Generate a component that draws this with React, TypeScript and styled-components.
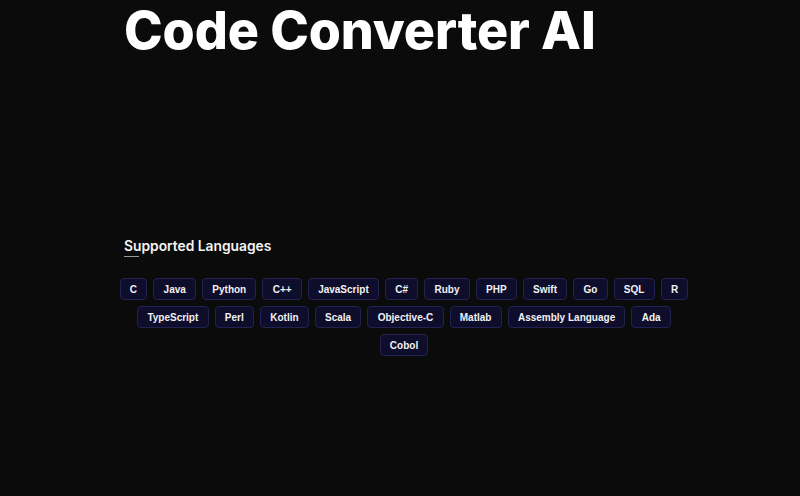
import React from 'react';
import styled, { createGlobalStyle } from 'styled-components';

const GlobalStyle = createGlobalStyle`
  html, body {
    margin: 0;
    padding: 0;
    background: #0b0b0b;
  }
  body {
    font-family: 'Inter', 'Liberation Sans', sans-serif;
    color: #ffffff;
  }
`;

const Page = styled.div`
  min-height: 496px;
  background: #0b0b0b;
  padding: 0 0 0 124px;
  box-sizing: border-box;
`;

const Title = styled.h1`
  margin: 0;
  padding-top: 1px;
  font-family: 'Inter', sans-serif;
  font-weight: 800;
  font-size: 52px;
  line-height: 60px;
  letter-spacing: -0.1px;
  color: #ffffff;
`;

const Section = styled.section`
  margin-top: 176px;
`;

const SectionTitle = styled.h2`
  margin: 0;
  font-family: 'Inter', sans-serif;
  font-weight: 600;
  font-size: 13.8px;
  line-height: 18px;
  color: #f4f4f4;
`;

const Underline = styled.div`
  width: 15px;
  height: 1px;
  margin-top: 1px;
  background: #9a9a9a;
`;

const TagList = styled.ul`
  list-style: none;
  margin: 21px 0 0 -8px;
  padding: 0;
  width: 576px;
  display: flex;
  flex-wrap: wrap;
  justify-content: center;
  gap: 6px;
`;

const Tag = styled.li`
  box-sizing: border-box;
  height: 22px;
  padding: 0 9.25px;
  display: flex;
  align-items: center;
  background: #0e0d2b;
  border: 1px solid #222150;
  border-radius: 4px;
  font-family: 'Liberation Sans', Arial, sans-serif;
  font-weight: 700;
  font-size: 10px;
  color: #f2f2f2;
  white-space: nowrap;
`;

const languages = [
  'C', 'Java', 'Python', 'C++', 'JavaScript', 'C#', 'Ruby', 'PHP', 'Swift', 'Go', 'SQL', 'R',
  'TypeScript', 'Perl', 'Kotlin', 'Scala', 'Objective-C', 'Matlab', 'Assembly Language', 'Ada',
  'Cobol'
];

export default function App() {
  return (
    <>
      <GlobalStyle />
      <Page>
        <Title>Code Converter AI</Title>
        <Section>
          <SectionTitle>Supported Languages</SectionTitle>
          <Underline />
          <TagList>
            {languages.map((lang) => (
              <Tag key={lang}>{lang}</Tag>
            ))}
          </TagList>
        </Section>
      </Page>
    </>
  );
}
